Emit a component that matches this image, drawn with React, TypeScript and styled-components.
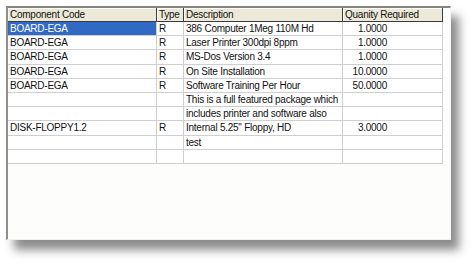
import React from 'react';
import styled, { createGlobalStyle } from 'styled-components';

const GlobalStyle = createGlobalStyle`
  html, body { margin: 0; padding: 0; background: #fff; }
  body { font-family: "Liberation Sans", Arial, sans-serif; }
`;

const Page = styled.div`width:474px;height:264px;padding:6px 0 0 6px;box-sizing:border-box;background:#fff;`;
const Panel = styled.div`
  width:445px;height:234px;box-sizing:border-box;background:#fdfdfc;
  border-style:solid;border-width:2px 1px 1px 2px;
  border-color:#85847f #f4f3ee #f4f3ee #8f8e89;
  box-shadow:8px 10px 9px rgba(0,0,0,0.45);
  overflow:hidden;
`;
const Grid = styled.div`
  display:grid;grid-template-columns:149px 27px 159px 100px;
  grid-template-rows:14px;grid-auto-rows:14.2px;
  font-size:10px;letter-spacing:-0.25px;color:#111;
`;
const Head = styled.div`
  background:#ece9d8;border-right:1px solid #3c3c3c;border-bottom:1px solid #3c3c3c;
  box-shadow:inset 1px 1px 0 #fff;
  padding:0 2px;line-height:13px;white-space:nowrap;overflow:hidden;
`;
const Cell = styled.div<{ $selected?: boolean; $num?: boolean }>`
  box-sizing:border-box;border-right:1px solid #cfcfcf;border-bottom:1px solid #cfcfcf;
  padding:${p => (p.$num ? '0 55px 0 2px' : '0 2px')};
  text-align:${p => (p.$num ? 'right' : 'left')};
  background:${p => (p.$selected ? '#316ac5' : '#fff')};
  color:${p => (p.$selected ? '#fff' : '#111')};
  line-height:13px;white-space:nowrap;overflow:hidden;
`;

const rows: [string, string, string, string][] = [
  ['BOARD-EGA', 'R', '386 Computer 1Meg 110M Hd', '1.0000'],
  ['BOARD-EGA', 'R', 'Laser Printer 300dpi 8ppm', '1.0000'],
  ['BOARD-EGA', 'R', 'MS-Dos Version 3.4', '1.0000'],
  ['BOARD-EGA', 'R', 'On Site Installation', '10.0000'],
  ['BOARD-EGA', 'R', 'Software Training Per Hour', '50.0000'],
  ['', '', 'This is a full featured package which', ''],
  ['', '', 'includes printer and software also', ''],
  ['DISK-FLOPPY1.2', 'R', 'Internal 5.25" Floppy, HD', '3.0000'],
  ['', '', 'test', ''],
  ['', '', '', ''],
];

export default function App() {
  return (
    <>
      <GlobalStyle />
      <Page>
        <Panel>
          <Grid>
            <Head>Component Code</Head>
            <Head>Type</Head>
            <Head>Description</Head>
            <Head>Quanity Required</Head>
            {rows.map((r, i) => (
              <React.Fragment key={i}>
                <Cell $selected={i === 0}>{r[0]}</Cell>
                <Cell>{r[1]}</Cell>
                <Cell>{r[2]}</Cell>
                <Cell $num>{r[3]}</Cell>
              </React.Fragment>
            ))}
          </Grid>
        </Panel>
      </Page>
    </>
  );
}
